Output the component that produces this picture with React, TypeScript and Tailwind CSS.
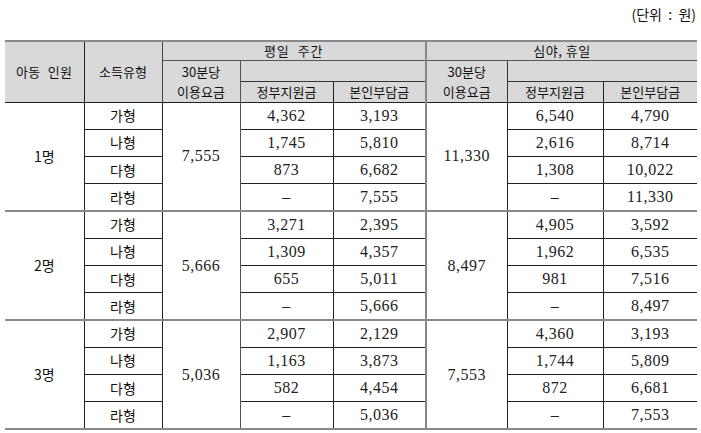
import React from 'react';

const groups = [
  {
    label: '1명',
    dayFee: '7,555',
    nightFee: '11,330',
    rows: [
      ['가형', '4,362', '3,193', '6,540', '4,790'],
      ['나형', '1,745', '5,810', '2,616', '8,714'],
      ['다형', '873', '6,682', '1,308', '10,022'],
      ['라형', '–', '7,555', '–', '11,330'],
    ],
  },
  {
    label: '2명',
    dayFee: '5,666',
    nightFee: '8,497',
    rows: [
      ['가형', '3,271', '2,395', '4,905', '3,592'],
      ['나형', '1,309', '4,357', '1,962', '6,535'],
      ['다형', '655', '5,011', '981', '7,516'],
      ['라형', '–', '5,666', '–', '8,497'],
    ],
  },
  {
    label: '3명',
    dayFee: '5,036',
    nightFee: '7,553',
    rows: [
      ['가형', '2,907', '2,129', '4,360', '3,193'],
      ['나형', '1,163', '3,873', '1,744', '5,809'],
      ['다형', '582', '4,454', '872', '6,681'],
      ['라형', '–', '5,036', '–', '7,553'],
    ],
  },
];

const sans = "font-['Noto_Sans_CJK_KR',sans-serif]";
const num = "font-['Liberation_Serif','Noto_Serif_CJK_KR',serif] text-[16px] tracking-[0.5px] text-[#222]";

export default function App() {
  return (
    <div className="w-[701px] h-[433px] bg-white text-[#111] pt-[4px] pl-[5px] pr-[4px]">
      <div className={`flex justify-end h-[36px] text-[14px] leading-[20px] pr-[1px] ${sans}`}>
        (단위&nbsp;&nbsp;:&nbsp;&nbsp;원)
      </div>

      <table className="w-[692px] table-fixed border-collapse border-t-2 border-b-2 border-[#8a8a8a] text-center">
        <colgroup>
          <col className="w-[79px]" />
          <col className="w-[78px]" />
          <col className="w-[78px]" />
          <col className="w-[93px]" />
          <col className="w-[93px]" />
          <col className="w-[81px]" />
          <col className="w-[96px]" />
          <col className="w-[94px]" />
        </colgroup>
        <thead className={`bg-[#d9d9d9] text-[13px] leading-[16px] ${sans}`}>
          <tr className="h-[19px]">
            <th rowSpan={3} className="font-normal border-r border-[#222] tracking-[0.5px]">
              아동&nbsp; 인원
            </th>
            <th rowSpan={3} className="font-normal border-r border-[#444]">
              소득유형
            </th>
            <th colSpan={3} className="font-normal border-r-2 border-b border-[#888] border-b-[#555] tracking-[1px]">
              평일&nbsp; 주간
            </th>
            <th colSpan={3} className="font-normal border-b border-[#555] tracking-[0.5px]">
              심야,&nbsp;휴일
            </th>
          </tr>
          <tr className="h-[20px]">
            <th rowSpan={2} className="font-normal border-r border-[#555] leading-[20px] pt-[1px]">
              <div>30분당</div>
              <div>이용요금</div>
            </th>
            <th colSpan={2} className="border-b border-[#333] border-r-2 border-r-[#888]" />
            <th rowSpan={2} className="font-normal border-r border-[#333] leading-[20px] pt-[1px]">
              <div>30분당</div>
              <div>이용요금</div>
            </th>
            <th colSpan={2} className="border-b border-[#333]" />
          </tr>
          <tr className="h-[20px]">
            <th className="font-normal border-r border-[#222]">정부지원금</th>
            <th className="font-normal border-r-2 border-[#888]">본인부담금</th>
            <th className="font-normal border-r border-[#222]">정부지원금</th>
            <th className="font-normal">본인부담금</th>
          </tr>
        </thead>
        <tbody className="border-t border-[#222]">
          {groups.map((g, gi) => (
            <React.Fragment key={g.label}>
              {g.rows.map((r, ri) => (
                <tr
                  key={r[0]}
                  className={`h-[27.25px] ${
                    ri === 0 && gi > 0 ? 'border-t-2 border-[#8a8a8a]' : ri > 0 ? 'border-t border-[#333]' : ''
                  }`}
                >
                  {ri === 0 && (
                    <td rowSpan={4} className={`${sans} text-[14px] border-r border-[#222]`}>
                      {g.label}
                    </td>
                  )}
                  <td className={`${sans} text-[14px] border-r border-[#222] ${ri > 0 ? 'border-t border-[#222]' : ''}`}>
                    {r[0]}
                  </td>
                  {ri === 0 && (
                    <td rowSpan={4} className={`${num} border-r border-[#555]`}>
                      {g.dayFee}
                    </td>
                  )}
                  <td className={`${num} border-r border-[#222] ${ri > 0 ? 'border-t border-[#222]' : ''}`}>
                    {r[1]}
                  </td>
                  <td className={`${num} border-r-2 border-r-[#888] ${ri > 0 ? 'border-t border-t-[#222]' : ''}`}>
                    {r[2]}
                  </td>
                  {ri === 0 && (
                    <td rowSpan={4} className={`${num} border-r border-[#222]`}>
                      {g.nightFee}
                    </td>
                  )}
                  <td className={`${num} border-r border-[#222] ${ri > 0 ? 'border-t border-[#222]' : ''}`}>
                    {r[3]}
                  </td>
                  <td className={`${num} ${ri > 0 ? 'border-t border-[#222]' : ''}`}>
                    {r[4]}
                  </td>
                </tr>
              ))}
            </React.Fragment>
          ))}
        </tbody>
      </table>
    </div>
  );
}
